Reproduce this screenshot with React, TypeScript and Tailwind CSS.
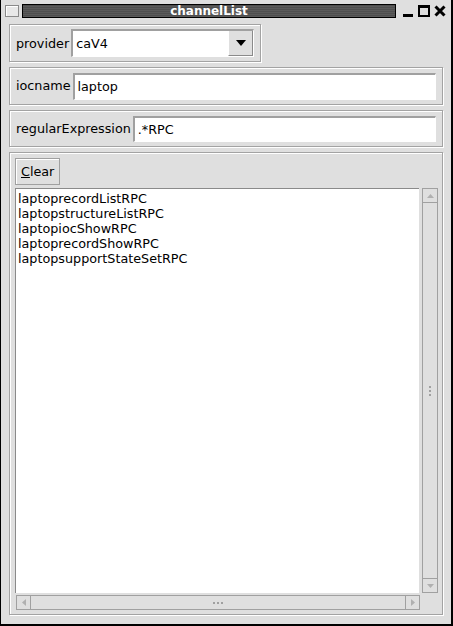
import React from 'react';

const items = [
  'laptoprecordListRPC',
  'laptopstructureListRPC',
  'laptopiocShowRPC',
  'laptoprecordShowRPC',
  'laptopsupportStateSetRPC',
];

// etched frame like the old Qt group boxes
const group = 'border border-[#a3a3a3] shadow-[inset_1px_1px_0_#ffffff,1px_1px_0_#ffffff]';
const field = 'bg-white border-t-2 border-l-2 border-[#a0a0a0] border-b border-r border-b-[#ffffff] border-r-[#ffffff]';

export default function App() {
  return (
    <div
      className="w-[453px] h-[626px] bg-[#dfdfdf] flex flex-col border-r-2 border-b-2 border-l border-[#000000] text-[12.75px] text-black"
      style={{ fontFamily: '"DejaVu Sans", sans-serif' }}
    >
      {/* title bar */}
      <div className="h-[21px] flex items-center shrink-0">
        <div className="w-[14px] h-[12px] ml-[4px] border border-[#8a8a8a] bg-[#e8e8e8] shadow-[inset_1px_1px_0_#ffffff]" />
        <div className="ml-[3px] w-[374px] h-[14px] bg-[#555555] border border-black flex items-center justify-center bg-[repeating-linear-gradient(0deg,#5a5a5a_0px,#5a5a5a_1px,#4e4e4e_1px,#4e4e4e_2px)]">
          <span className="text-white font-bold text-[12px] leading-none">channelList</span>
        </div>
        <div className="flex items-center gap-[4px] ml-[6px]">
          <svg width="12" height="12" viewBox="0 0 12 12">
            <rect x="1" y="9" width="10" height="3" fill="#000" />
          </svg>
          <svg width="12" height="12" viewBox="0 0 12 12">
            <rect x="1" y="1" width="10" height="10" fill="none" stroke="#000" strokeWidth="2" />
            <rect x="1" y="1" width="10" height="2" fill="#000" />
          </svg>
          <svg width="12" height="12" viewBox="0 0 12 12">
            <path d="M1.5 1.5 L10.5 10.5 M10.5 1.5 L1.5 10.5" stroke="#000" strokeWidth="3" />
          </svg>
        </div>
      </div>

      <div className="flex-1 flex flex-col px-[8px] pt-[3px] pb-[9px] gap-[5px]">
        {/* provider */}
        <div className={`${group} w-[252px] h-[38px] flex items-center px-[6px] gap-[2px]`}>
          <span className="pt-[1px]">provider</span>
          <div className={`${field} flex h-[28px] w-[185px]`}>
            <span className="flex-1 pl-[3px] leading-[26px]">caV4</span>
            <div className="w-[25px] bg-[#dfdfdf] border-l border-[#ffffff] border-r border-b border-r-[#8a8a8a] border-b-[#8a8a8a] flex items-center justify-center">
              <svg width="10" height="6" viewBox="0 0 10 6">
                <path d="M0 0 L10 0 L5 6 Z" fill="#000" />
              </svg>
            </div>
          </div>
        </div>

        {/* iocname */}
        <div className={`${group} h-[38px] flex items-center px-[6px] gap-[2px]`}>
          <span>iocname</span>
          <div className={`${field} flex-1 h-[27px] pl-[3px] leading-[24px]`}>laptop</div>
        </div>

        {/* regularExpression */}
        <div className={`${group} h-[37px] flex items-center px-[6px] gap-[2px]`}>
          <span>regularExpression</span>
          <div className={`${field} flex-1 h-[26px] pl-[3px] leading-[23px]`}>.*RPC</div>
        </div>

        {/* list */}
        <div className={`${group} flex-1 flex flex-col pl-[5px] pr-[4px] pt-[5px] pb-[4px]`}>
          <button className="self-start h-[27px] px-[5px] pt-[1px] bg-[#dfdfdf] border border-[#a0a0a0] shadow-[inset_1px_1px_0_#ffffff] leading-none">
            <span className="underline">C</span>lear
          </button>
          <div className="flex-1 flex flex-col mt-[3px]">
            <div className="flex-1 flex">
              <div className="flex-1 bg-white border-t border-l border-[#8a8a8a] pl-[2px] pt-[2px] leading-[15px]">
                {items.map((t) => (
                  <div key={t}>{t}</div>
                ))}
              </div>
              <div className="w-[16px] ml-[3px] flex flex-col border border-[#a0a0a0]">
                <div className="h-[14px] border-b border-[#a0a0a0] flex items-center justify-center">
                  <svg width="7" height="4" viewBox="0 0 7 4"><path d="M0 4 L7 4 L3.5 0 Z" fill="#b0b0b0" /></svg>
                </div>
                <div className="flex-1 flex items-center justify-center">
                  <div className="flex flex-col gap-[2px]">
                    <div className="w-[2px] h-[2px] bg-[#a0a0a0]" />
                    <div className="w-[2px] h-[2px] bg-[#a0a0a0]" />
                    <div className="w-[2px] h-[2px] bg-[#a0a0a0]" />
                  </div>
                </div>
                <div className="h-[14px] border-t border-[#a0a0a0] flex items-center justify-center">
                  <svg width="7" height="4" viewBox="0 0 7 4"><path d="M0 0 L7 0 L3.5 4 Z" fill="#b0b0b0" /></svg>
                </div>
              </div>
            </div>
            <div className="h-[15px] mt-[2px] mr-[18px] ml-[1px] flex border border-[#a0a0a0]">
              <div className="w-[14px] border-r border-[#a0a0a0] flex items-center justify-center">
                <svg width="4" height="7" viewBox="0 0 4 7"><path d="M4 0 L4 7 L0 3.5 Z" fill="#b0b0b0" /></svg>
              </div>
              <div className="flex-1 flex items-center justify-center">
                <div className="flex gap-[2px]">
                  <div className="w-[2px] h-[2px] bg-[#a0a0a0]" />
                  <div className="w-[2px] h-[2px] bg-[#a0a0a0]" />
                  <div className="w-[2px] h-[2px] bg-[#a0a0a0]" />
                </div>
              </div>
              <div className="w-[14px] border-l border-[#a0a0a0] flex items-center justify-center">
                <svg width="4" height="7" viewBox="0 0 4 7"><path d="M0 0 L0 7 L4 3.5 Z" fill="#b0b0b0" /></svg>
              </div>
            </div>
          </div>
        </div>
      </div>
    </div>
  );
}
